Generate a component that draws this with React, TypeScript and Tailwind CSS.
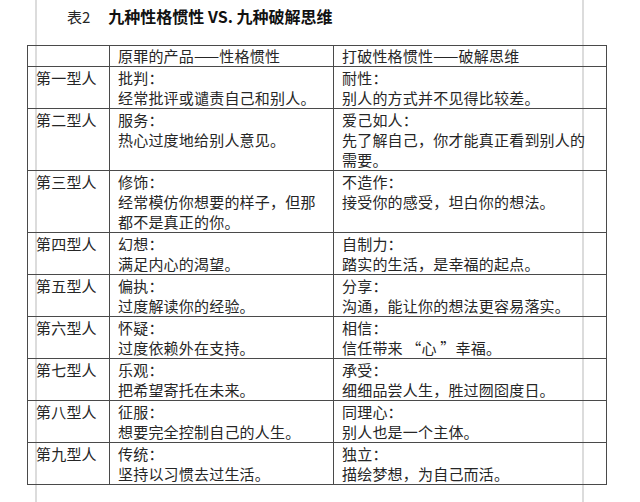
import React from 'react';

type Row = { type: string; left: string[]; right: string[] };

const rows: Row[] = [
  { type: '第一型人', left: ['批判：', '经常批评或谴责自己和别人。'], right: ['耐性：', '别人的方式并不见得比较差。'] },
  { type: '第二型人', left: ['服务：', '热心过度地给别人意见。'], right: ['爱己如人：', '先了解自己，你才能真正看到别人的', '需要。'] },
  { type: '第三型人', left: ['修饰：', '经常模仿你想要的样子，但那', '都不是真正的你。'], right: ['不造作：', '接受你的感受，坦白你的想法。'] },
  { type: '第四型人', left: ['幻想：', '满足内心的渴望。'], right: ['自制力：', '踏实的生活，是幸福的起点。'] },
  { type: '第五型人', left: ['偏执：', '过度解读你的经验。'], right: ['分享：', '沟通，能让你的想法更容易落实。'] },
  { type: '第六型人', left: ['怀疑：', '过度依赖外在支持。'], right: ['相信：', '信任带来 “心 ”幸福。'] },
  { type: '第七型人', left: ['乐观：', '把希望寄托在未来。'], right: ['承受：', '细细品尝人生，胜过囫囵度日。'] },
  { type: '第八型人', left: ['征服：', '想要完全控制自己的人生。'], right: ['同理心：', '别人也是一个主体。'] },
  { type: '第九型人', left: ['传统：', '坚持以习惯去过生活。'], right: ['独立：', '描绘梦想，为自己而活。'] },
];

const font = { fontFamily: '"Noto Sans CJK SC", "Noto Sans", sans-serif' };

function Lines({ lines }: { lines: string[] }) {
  return (
    <>
      {lines.map((l, i) => (
        <div key={i} className="whitespace-nowrap">
          {l}
        </div>
      ))}
    </>
  );
}

export default function App() {
  return (
    <div className="relative w-[640px] h-[502px] bg-white overflow-hidden text-[#262626]" style={font}>
      <div className="absolute left-[35px] top-0 h-full w-[2px] bg-[#dcdcdc]" />
      <div className="absolute left-[582px] top-0 h-full w-[2px] bg-[#dcdcdc]" />

      <div className="relative pt-[5px] pl-[67px] h-[45px] text-[15px] leading-[22px]">
        <span>表2</span>
        <span className="ml-[18px] text-[16px] font-bold text-[#111]">九种性格惯性 VS. 九种破解思维</span>
      </div>

      <table className="relative ml-[27px] border-collapse table-fixed text-[15px] leading-[20px] font-normal tracking-[0.2px]">
        <colgroup>
          <col className="w-[82px]" />
          <col className="w-[224px]" />
          <col className="w-[273px]" />
        </colgroup>
        <thead>
          <tr className="h-[20px]">
            <th className="border border-[#4a4a4a] px-2 font-normal text-left" />
            <th className="border border-[#4a4a4a] px-2 font-normal text-left align-top">原罪的产品——性格惯性</th>
            <th className="border border-[#4a4a4a] px-2 font-normal text-left align-top">打破性格惯性——破解思维</th>
          </tr>
        </thead>
        <tbody>
          {rows.map((r) => (
            <tr key={r.type}>
              <td className="border border-[#4a4a4a] px-2 pt-[1px] align-top">{r.type}</td>
              <td className="border border-[#4a4a4a] px-2 pt-[1px] align-top">
                <Lines lines={r.left} />
              </td>
              <td className="border border-[#4a4a4a] px-2 pt-[1px] align-top">
                <Lines lines={r.right} />
              </td>
            </tr>
          ))}
        </tbody>
      </table>
    </div>
  );
}
